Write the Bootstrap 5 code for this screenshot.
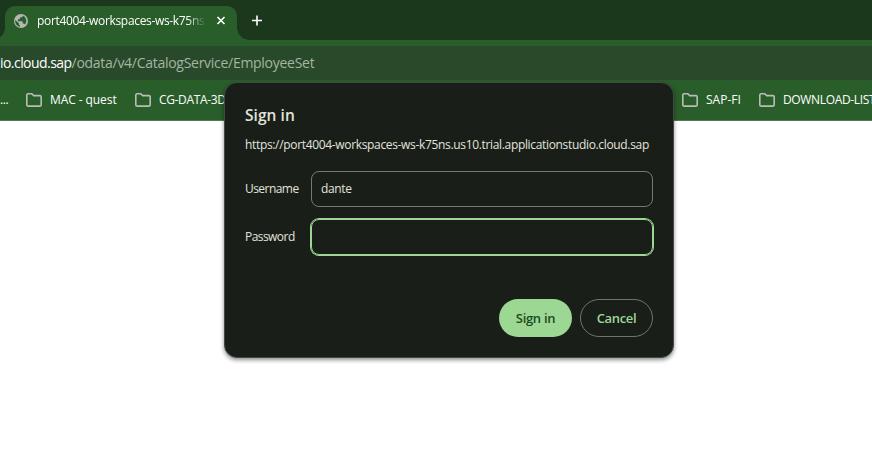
<!DOCTYPE html>
<html lang="en">
<head>
<meta charset="utf-8">
<meta name="viewport" content="width=device-width, initial-scale=1">
<title>Sign in</title>
<link href="https://cdn.jsdelivr.net/npm/bootstrap@5.3.0/dist/css/bootstrap.min.css" rel="stylesheet">
<style>
body { font-family: "Open Sans", "Noto Sans", sans-serif; font-size: 12px; line-height: 16px; background: #fff; height: 457px; }
.tab-strip { height: 40px; background: #1b381c; padding: 6px 0 0 5px; }
.browser-tab { width: 232px; height: 34px; background: #295e2b; border-radius: 10px 10px 0 0; padding: 0 11px 5px 9px; color: #fff; }
.browser-tab::before, .browser-tab::after { content: ""; position: absolute; bottom: 0; width: 12px; height: 12px; }
.browser-tab::before { left: -12px; background: radial-gradient(circle at 0 0, transparent 11.5px, #295e2b 12px); }
.browser-tab::after { right: -12px; background: radial-gradient(circle at 100% 0, transparent 11.5px, #295e2b 12px); }
.tab-title { width: 169px; margin-left: 9px; letter-spacing: -.33px; -webkit-mask-image: linear-gradient(90deg, #000 150px, transparent 169px); mask-image: linear-gradient(90deg, #000 150px, transparent 169px); }
.new-tab { margin: 0 0 5px 14px; }
.toolbar { background: #295e2b; padding-top: 6px; }
.address { height: 34px; background: #28492a; color: #a5b5a3; font-size: 14px; letter-spacing: -.28px; }
.address .host { color: #fff; letter-spacing: -.55px; }
.bookmarks { height: 41px; background: #295e2b; border-bottom: 1px solid #4f7b50; color: #fff; letter-spacing: -.35px; }
.bookmark { gap: 8px; }
.bookmark svg { width: 16px; height: 14px; }
.bm-more { width: 26px; }
.bm-a { width: 109px; letter-spacing: -.08px; }
.bm-b { width: 547px; }
.bm-c { width: 77px; letter-spacing: 0; }
.signin { left: 224px; top: 82px; width: 450px; height: 276px; padding: 22px 20px 20px; background: #1a1e19; border: 1px solid #454945; border-radius: 13px; color: #e1e4dc; box-shadow: 0 2px 4px rgba(0,0,0,.45); }
.signin h1 { font-size: 15.5px; line-height: 20px; font-weight: 600; letter-spacing: 0.05px; }
.origin { margin-top: 12px; letter-spacing: -.335px; }
.form-rows { margin-top: 18px; gap: 12px; }
.field-label { width: 66px; letter-spacing: -.55px; }
.signin .form-control { height: 36px; width: 342px; background: transparent; border: 1px solid #757a73; border-radius: 8px; color: #e1e4dc; font-size: 12px; padding: 0 9px 1px; letter-spacing: -.35px; box-shadow: none; }
.signin .form-control.active-field { border-color: #9cd893; box-shadow: 0 0 0 1px #9cd893; }
.signin .btn { width: 73px; height: 38px; padding: 1px 0 0; border-radius: 19px; font-size: 13px; font-weight: 600; letter-spacing: -.35px; }
.signin .btn-accept { background: #9dd794; color: #1d4a20; border: 0; letter-spacing: -.3px; }
.btn-dismiss { background: transparent; color: #9dd794; border: 1px solid #6a7967; }
</style>
</head>
<body class="position-relative overflow-hidden">
<header>
  <div class="tab-strip d-flex align-items-center">
    <div class="browser-tab position-relative d-flex align-items-center">
      <svg class="flex-shrink-0" width="14" height="14" viewBox="0 0 14 14"><circle cx="7" cy="7" r="7" fill="#b4b7b4"/><path d="M1.300 6 4.900 9.300v1c0 .6.5 1 1.100 1v1.500A5.800 5.800 0 0 1 1.300 6ZM8.700 1.400V2c0 .7-.5 1.300-1.200 1.300H6v1.300c0 .4-.3.700-.7.700H4V7.200h4c.4 0 .7.300.7.700v1.700h.8c.6 0 1.100.4 1.300 1a5.800 5.800 0 0 0-2.100-9.200Z" fill="#295e2b"/></svg>
      <span class="tab-title text-nowrap flex-shrink-0">port4004-workspaces-ws-k75ns</span>
      <svg class="ms-auto flex-shrink-0" width="10" height="10" viewBox="0 0 10 10" stroke="#fff" stroke-width="1.600"><path d="m1.500 1 7 7m0-7-7 7"/></svg>
    </div>
    <svg class="new-tab" width="12" height="12" viewBox="0 0 12 12" stroke="#fff" stroke-width="1.600"><path d="M6 .5v10M1 5.500h10"/></svg>
  </div>
  <div class="toolbar">
    <div class="address d-flex align-items-center text-nowrap"><span class="host">io.cloud.sap</span><span>/odata/v4/CatalogService/EmployeeSet</span></div>
  </div>
  <nav class="bookmarks d-flex align-items-center text-nowrap">
    <span class="bm-more flex-shrink-0">...</span>
    <span class="bookmark bm-a d-flex align-items-center flex-shrink-0"><svg viewBox="0 0 16 14" fill="none" stroke="#b9bdb8" stroke-width="1.600"><path d="M.8 11.700V2.200c0-.8.5-1.400 1.300-1.400h3.700l1.800 1.800h6.200c.8 0 1.400.600 1.400 1.400v7.700c0 .8-.6 1.400-1.400 1.400H2.100c-.8 0-1.300-.6-1.300-1.400Z"/></svg><span>MAC - quest</span></span>
    <span class="bookmark bm-b d-flex align-items-center flex-shrink-0"><svg viewBox="0 0 16 14" fill="none" stroke="#b9bdb8" stroke-width="1.600"><path d="M.8 11.700V2.200c0-.8.5-1.400 1.300-1.400h3.700l1.800 1.800h6.200c.8 0 1.400.600 1.400 1.400v7.700c0 .8-.6 1.400-1.400 1.400H2.100c-.8 0-1.300-.6-1.300-1.400Z"/></svg><span>CG-DATA-3D</span></span>
    <span class="bookmark bm-c d-flex align-items-center flex-shrink-0"><svg viewBox="0 0 16 14" fill="none" stroke="#b9bdb8" stroke-width="1.600"><path d="M.8 11.700V2.200c0-.8.5-1.400 1.300-1.400h3.700l1.800 1.800h6.200c.8 0 1.400.600 1.400 1.400v7.700c0 .8-.6 1.400-1.400 1.400H2.100c-.8 0-1.300-.6-1.300-1.400Z"/></svg><span>SAP-FI</span></span>
    <span class="bookmark d-flex align-items-center flex-shrink-0"><svg viewBox="0 0 16 14" fill="none" stroke="#b9bdb8" stroke-width="1.600"><path d="M.8 11.700V2.200c0-.8.5-1.400 1.300-1.400h3.700l1.800 1.800h6.200c.8 0 1.400.600 1.400 1.400v7.700c0 .8-.6 1.400-1.400 1.400H2.100c-.8 0-1.300-.6-1.300-1.400Z"/></svg><span>DOWNLOAD-LIST</span></span>
  </nav>
</header>
<form class="signin position-absolute d-flex flex-column" onsubmit="return false">
  <h1 class="mb-0">Sign in</h1>
  <div class="origin text-nowrap">https://port4004-workspaces-ws-k75ns.us10.trial.applicationstudio.cloud.sap</div>
  <div class="form-rows d-flex flex-column">
    <div class="d-flex align-items-center">
      <label class="field-label" for="user">Username</label>
      <input id="user" class="form-control" type="text" value="dante">
    </div>
    <div class="d-flex align-items-center">
      <label class="field-label" for="pass">Password</label>
      <input id="pass" class="form-control active-field" type="password">
    </div>
  </div>
  <div class="d-flex justify-content-end gap-2 mt-auto">
    <button class="btn btn-accept" type="submit">Sign in</button>
    <button class="btn btn-dismiss" type="button">Cancel</button>
  </div>
</form>
<script src="https://cdn.jsdelivr.net/npm/bootstrap@5.3.0/dist/js/bootstrap.bundle.min.js"></script>
</body>
</html>
